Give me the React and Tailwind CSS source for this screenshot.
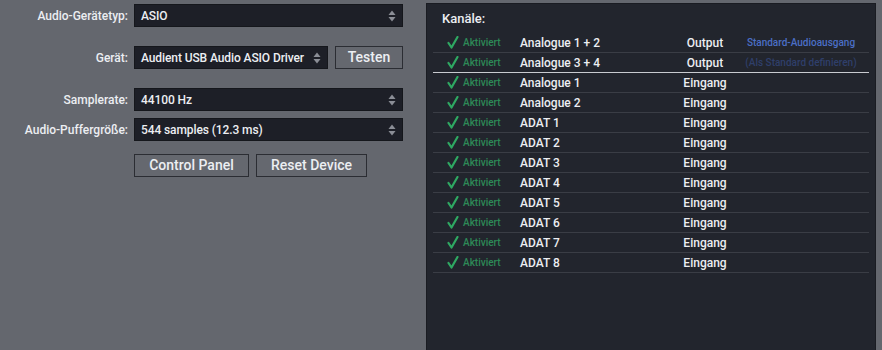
const channels = [
  { name: "Analogue 1 + 2", dir: "Output", extra: "Standard-Audioausgang", strong: true },
  { name: "Analogue 3 + 4", dir: "Output", extra: "(Als Standard definieren)", strong: false, bright: true },
  { name: "Analogue 1", dir: "Eingang" },
  { name: "Analogue 2", dir: "Eingang" },
  { name: "ADAT 1", dir: "Eingang" },
  { name: "ADAT 2", dir: "Eingang" },
  { name: "ADAT 3", dir: "Eingang" },
  { name: "ADAT 4", dir: "Eingang" },
  { name: "ADAT 5", dir: "Eingang" },
  { name: "ADAT 6", dir: "Eingang" },
  { name: "ADAT 7", dir: "Eingang" },
  { name: "ADAT 8", dir: "Eingang" },
];

const Arrows = () => (
  <svg width="8" height="12" viewBox="0 0 8 12" className="shrink-0">
    <path d="M4 0.5 L7.5 5 H0.5 Z" fill="#8b8e96" />
    <path d="M4 11.5 L7.5 7 H0.5 Z" fill="#8b8e96" />
  </svg>
);

const Select = ({ value, className = "" }) => (
  <div
    className={`h-[23px] flex items-center justify-between pl-[6px] pr-[6px] bg-[#1d1f27] border border-[#15171c] text-[#eceef2] ${className}`}
  >
    <span className="tracking-[-0.1px]">{value}</span>
    <Arrows />
  </div>
);

const Btn = ({ children, className = "" }) => (
  <div
    className={`h-[23px] flex items-center justify-center border border-[#2b2d33] bg-[#65686f] text-[#eceef2] text-[14px] ${className}`}
  >
    {children}
  </div>
);

const Check = () => (
  <svg width="12" height="13" viewBox="0 0 12 13">
    <path d="M1.5 7 L4.5 11.5 L10.5 1" stroke="#2fa862" strokeWidth="2.2" fill="none" strokeLinecap="round" strokeLinejoin="round" />
  </svg>
);

export default function App() {
  return (
    <div
      className="w-[882px] h-[350px] overflow-hidden bg-[#64676e] flex text-[12px] font-medium"
      style={{ fontFamily: "Roboto, 'Liberation Sans', sans-serif" }}
    >
      {/* Left settings */}
      <div className="w-[426px] shrink-0 pt-[4px]">
        <div className="flex items-center">
          <div className="w-[128px] text-right text-[#eceef2]">Audio-Gerätetyp:</div>
          <Select value="ASIO" className="ml-[6px] w-[269px]" />
        </div>
        <div className="flex items-center mt-[19px]">
          <div className="w-[128px] text-right text-[#eceef2]">Gerät:</div>
          <Select value="Audient USB Audio ASIO Driver" className="ml-[6px] w-[194px]" />
          <Btn className="ml-[7px] w-[68px]">Testen</Btn>
        </div>
        <div className="flex items-center mt-[19px]">
          <div className="w-[128px] text-right text-[#eceef2]">Samplerate:</div>
          <Select value="44100 Hz" className="ml-[6px] w-[269px]" />
        </div>
        <div className="flex items-center mt-[7px]">
          <div className="w-[128px] text-right text-[#eceef2]">Audio-Puffergröße:</div>
          <Select value="544 samples (12.3 ms)" className="ml-[6px] w-[269px]" />
        </div>
        <div className="flex items-center mt-[13px] ml-[134px] gap-[7px]">
          <Btn className="w-[115px]">Control Panel</Btn>
          <Btn className="w-[111px]">Reset Device</Btn>
        </div>
      </div>

      {/* Channels panel */}
      <div className="mt-[3px] w-[450px] h-[360px] shrink-0 bg-[#22252d] border border-[#1a1c22] px-[6px]">
        <div className="pl-[9px] pt-[5px] h-[29px] text-[13px] text-[#eceef2]">Kanäle:</div>
        {channels.map((c, i) => (
          <div
            key={i}
            className={`h-[20px] flex items-center border-b ${c.bright ? "border-[#c9cbd0]" : "border-[#3a3d45]"}`}
          >
            <div className="w-[14px]" />
            <Check />
            <span className="ml-[4px] w-[57px] text-[10px] text-[#2d8a57]">Aktiviert</span>
            <span className="w-[151px] text-[#eceef2]">{c.name}</span>
            <span className="w-[68px] text-center text-[#eceef2]">{c.dir}</span>
            {c.extra && (
              <span
                className={`w-[124px] text-center text-[10px] ${c.strong ? "text-[#4b6fc6]" : "text-[#2f3f6a]"}`}
              >
                {c.extra}
              </span>
            )}
          </div>
        ))}
      </div>
    </div>
  );
}
